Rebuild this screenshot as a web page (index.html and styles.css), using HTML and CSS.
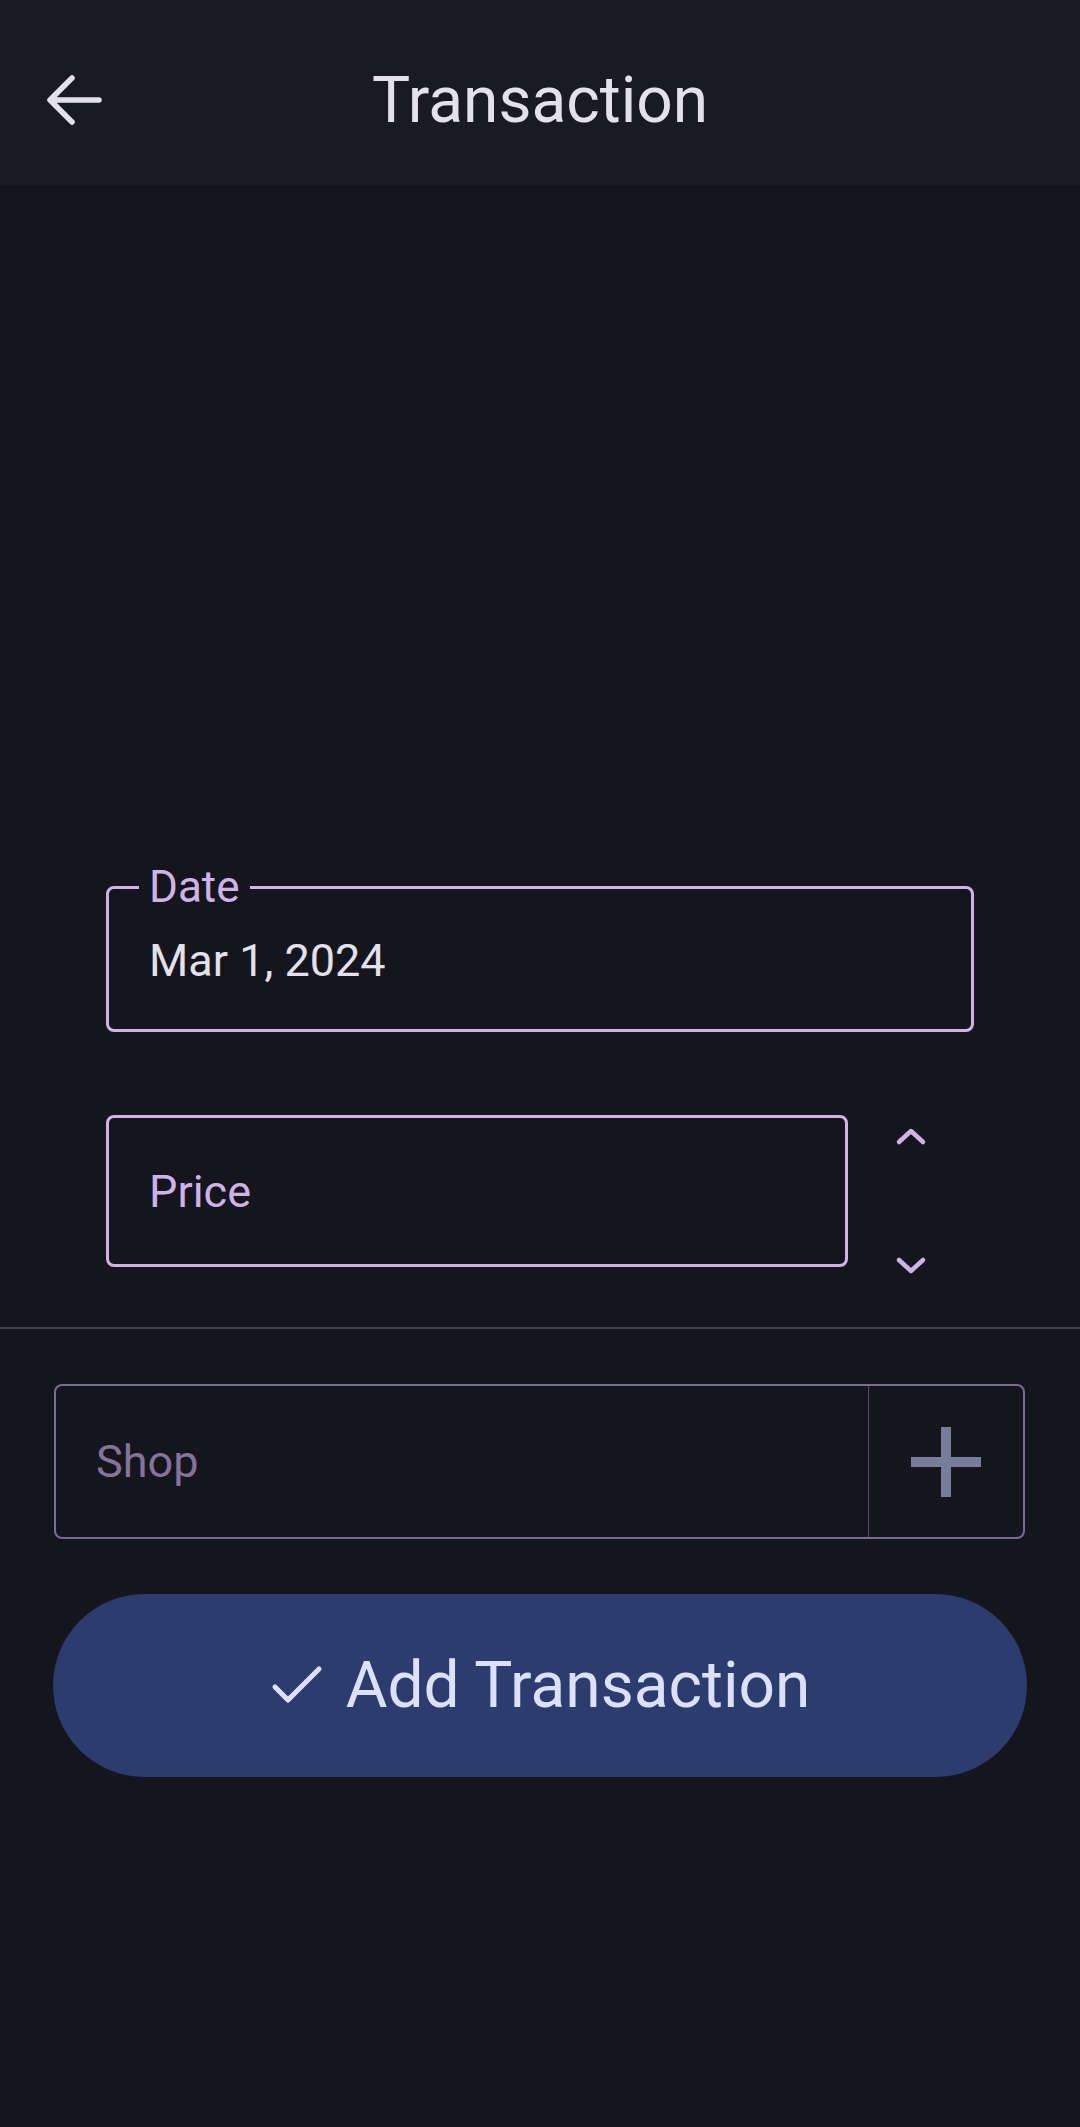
FILE: index.html
```html
<!DOCTYPE html>
<html lang="en">
<head>
  <meta charset="UTF-8" />
  <meta name="viewport" content="width=device-width, initial-scale=1.0" />
  <title>Transaction</title>
  <link rel="stylesheet" href="styles.css">
</head>
<body>
  <header class="top-bar">
    <button class="back-btn" aria-label="Back">
      <svg width="60" height="60" viewBox="0 0 60 60">
        <path d="M6 30H55M6 30L28 8M6 30L28 52" />
      </svg>
    </button>
    <h1 class="title">Transaction</h1>
  </header>

  <main class="screen">
    <div class="fields">
      <fieldset class="date-field">
        <legend>Date</legend>
        <div class="field-value">Mar 1, 2024</div>
      </fieldset>

      <div class="price-row">
        <div class="price-field">Price</div>
        <div class="stepper">
          <svg width="40" height="40" viewBox="0 0 40 40"><path d="M8 25L20 14L32 25" /></svg>
          <svg width="40" height="40" viewBox="0 0 40 40"><path d="M8 15L20 26L32 15" /></svg>
        </div>
      </div>
    </div>

    <hr class="divider" />

    <div class="actions">
      <div class="shop-field">
        <span class="shop-placeholder">Shop</span>
        <button class="add-shop" aria-label="Add shop">
          <svg width="70" height="70" viewBox="0 0 70 70"><path d="M35 0V70M0 35H70" /></svg>
        </button>
      </div>

      <button class="submit-btn">
        <svg width="54" height="44" viewBox="0 0 54 44"><path d="M5 23L18 36L49 5" /></svg>
        <span>Add Transaction</span>
      </button>
    </div>
  </main>
</body>
</html>
```

FILE: styles.css
```css
body {
  margin: 0;
  min-height: 2127px;
  background-color: #15151e;
  color: #e3e1ec;
  font-family: Roboto, 'Noto Sans', sans-serif;
}

button {
  font-family: inherit;
  background: none;
  border: none;
  padding: 0;
  cursor: pointer;
}

/* top bar */
.top-bar {
  display: grid;
  grid-template-columns: 1fr auto 1fr;
  align-items: center;
  height: 170px;
  padding-top: 15px;
  background-color: #1a1a24;
}

.back-btn {
  justify-self: start;
  margin-left: 44px;
  display: flex;
}

.back-btn path {
  fill: none;
  stroke: #e3e1ec;
  stroke-width: 5.5;
  stroke-linecap: round;
  stroke-linejoin: round;
}

.title {
  margin: 0;
  font-size: 64px;
  font-weight: 400;
  color: #e3e1ec;
}

/* form fields */
.fields {
  padding: 676px 106px 0;
}

.date-field {
  margin: 0;
  padding: 22px 0 42px 40px;
  border: 3px solid #cfb3e8;
  border-radius: 8px;
}

.date-field legend {
  margin-left: -10px;
  padding: 0 10px;
  font-size: 44px;
  line-height: 52px;
  color: #cfb3e8;
}

.field-value {
  font-size: 45px;
  line-height: 52px;
  color: #e3e1ec;
}

.price-row {
  display: flex;
  align-items: flex-start;
  margin-top: 83px;
}

.price-field {
  flex: 1;
  display: flex;
  align-items: center;
  height: 146px;
  padding-left: 40px;
  border: 3px solid #cfb3e8;
  border-radius: 8px;
  font-size: 45px;
  color: #cfb3e8;
}

.stepper {
  width: 126px;
  height: 168px;
  margin-top: 2px;
  margin-bottom: -18px;
  display: flex;
  flex-direction: column;
  justify-content: space-between;
  align-items: center;
}

.stepper path {
  fill: none;
  stroke: #cfb3e8;
  stroke-width: 4.5;
  stroke-linecap: round;
  stroke-linejoin: round;
}

.divider {
  margin: 60px 0 0;
  border: none;
  border-top: 2px solid #43434d;
}

/* shop + submit */
.actions {
  padding: 0 55px 0 54px;
}

.shop-field {
  display: flex;
  height: 151px;
  margin-top: 55px;
  border: 2px solid #7b6a92;
  border-radius: 8px;
}

.shop-placeholder {
  flex: 1;
  display: flex;
  align-items: center;
  padding-left: 40px;
  font-size: 45px;
  color: #857399;
}

.add-shop {
  width: 155px;
  display: flex;
  align-items: center;
  justify-content: center;
  border-left: 1px solid #584d68;
}

.add-shop path {
  stroke: #777c98;
  stroke-width: 10;
}

.submit-btn {
  display: flex;
  align-items: center;
  justify-content: center;
  gap: 22px;
  width: 974px;
  height: 183px;
  margin-top: 55px;
  margin-left: -1px;
  border-radius: 92px;
  background-color: #2c3c6e;
  color: #dbe1fa;
  font-size: 64px;
}

.submit-btn path {
  fill: none;
  stroke: #dbe1fa;
  stroke-width: 5;
  stroke-linecap: round;
  stroke-linejoin: round;
}
```
